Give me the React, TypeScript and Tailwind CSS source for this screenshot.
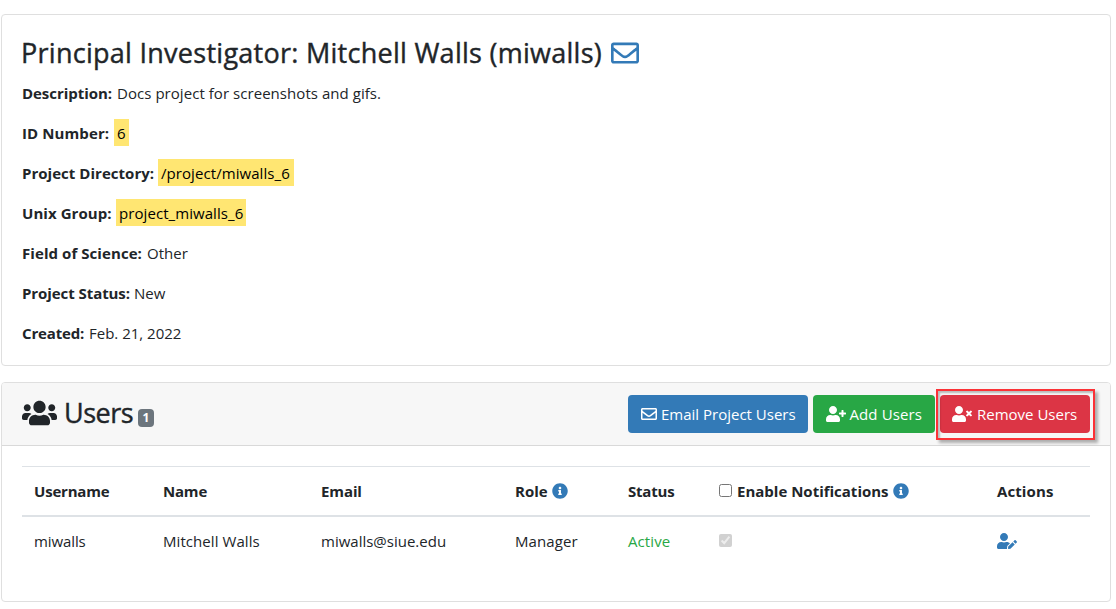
import type { ReactNode } from "react";
import {
  FaInfoCircle,
  FaRegEnvelope,
  FaUserEdit,
  FaUserPlus,
  FaUsers,
  FaUserTimes,
} from "react-icons/fa";

function Field({ label, labelClass, children }: { label: string; labelClass: string; children: ReactNode }) {
  return (
    <p className="flex h-6 items-center whitespace-nowrap">
      <b className={`${labelClass} shrink-0 font-bold`}>{label}</b>
      {children}
    </p>
  );
}

function Mark({ className, children }: { className: string; children: ReactNode }) {
  return (
    <mark className={`${className} -mt-px flex h-[27px] items-center bg-[#ffe672] pl-[3px] text-black`}>
      <span className="mt-px tracking-[0.07px]">{children}</span>
    </mark>
  );
}

export default function App() {
  return (
    <div className="h-[609px] w-[1116px] overflow-hidden bg-white pl-px pt-[14px] font-['Open_Sans','Noto_Sans',sans-serif] text-[15px] leading-6 text-[#212529]">
      <section className="h-[352px] w-[1110px] rounded border border-[#dfdfdf] px-5 pt-[21px]">
        <h3 className="flex h-[33px] items-center whitespace-nowrap text-[27px] font-medium tracking-[0.27px] [-webkit-text-stroke:0.4px_#212529]">
          <span className="-ml-px w-[590px]">Principal Investigator: Mitchell Walls (miwalls)</span>
          <FaRegEnvelope className="size-7 text-[#337ab7]" />
        </h3>
        <div className="mt-3 flex flex-col gap-4">
          <Field label="Description:" labelClass="w-[95px] tracking-[-0.05px]">
            <span className="tracking-[0.05px]">Docs project for screenshots and gifs.</span>
          </Field>
          <Field label="ID Number:" labelClass="w-[92px] tracking-[0.1px]">
            <Mark className="w-[15px]">6</Mark>
          </Field>
          <Field label="Project Directory:" labelClass="w-[136px] tracking-[0.03px]">
            <Mark className="w-[136px]">/project/miwalls_6</Mark>
          </Field>
          <Field label="Unix Group:" labelClass="w-[94px] tracking-[0.07px]">
            <Mark className="w-[130px]">project_miwalls_6</Mark>
          </Field>
          <Field label="Field of Science:" labelClass="w-[125px] tracking-[0.07px]">
            <span>Other</span>
          </Field>
          <Field label="Project Status:" labelClass="w-[112px] tracking-[-0.07px]">
            <span>New</span>
          </Field>
          <Field label="Created:" labelClass="w-[67px] tracking-[-0.15px]">
            <span>Feb. 21, 2022</span>
          </Field>
        </div>
      </section>

      <section className="mt-4 h-[220px] w-[1110px] rounded border border-[#dfdfdf]">
        <header className="flex h-[63px] items-center justify-between rounded-t-[3px] border-b border-[#d9d9d9] bg-[#f7f7f7] pl-5 pr-[20px]">
          <h3 className="flex items-center text-[27px] font-medium tracking-[-0.5px]">
            <FaUsers className="-mt-0.5 h-[28px] w-[35px]" />
            <span className="-mt-0.5 ml-[7px] w-[74px] [-webkit-text-stroke:0.4px_#212529]">Users</span>
            <span className="mt-2 flex h-[18px] w-4 items-center justify-center rounded bg-[#6c757d] text-[12px] font-bold leading-none tracking-normal text-white">
              1
            </span>
          </h3>
          <div className="flex whitespace-nowrap text-white">
            <button className="flex h-[38px] w-[180px] items-center rounded bg-[#337ab7] pl-[13px]">
              <FaRegEnvelope className="mr-1 size-4" />
              <span>Email Project Users</span>
            </button>
            <button className="ml-[5px] flex h-[38px] w-[122px] items-center rounded bg-[#28a745] pl-[12.5px]">
              <FaUserPlus className="mr-1 h-4 w-5" />
              <span className="tracking-[0.1px]">Add Users</span>
            </button>
            <div className="relative ml-[5px]">
              <button className="flex h-[38px] w-[150px] items-center rounded bg-[#dc3545] pl-[12px]">
                <FaUserTimes className="mr-[5px] h-4 w-5" />
                <span>Remove Users</span>
              </button>
              <span className="pointer-events-none absolute -left-1 -top-1.5 h-[51px] w-[159px] border-2 border-[#fb3237] shadow-[3px_3px_3px_rgba(0,0,0,0.3),inset_2px_2px_2px_rgba(0,0,0,0.25)]" />
            </div>
          </div>
        </header>
        <div className="px-5 pt-5">
          <div className="grid h-[51px] grid-cols-[129px_158px_194px_113px_91px_278px_1fr] items-center whitespace-nowrap border-b-2 border-t border-[#dee2e6] pl-3 font-bold">
            <span className="tracking-[-0.2px]">Username</span>
            <span className="tracking-[-0.2px]">Name</span>
            <span className="tracking-[-0.1px]">Email</span>
            <span className="flex items-center">
              <span className="w-[37px]">Role</span>
              <FaInfoCircle className="size-4 text-[#337ab7]" />
            </span>
            <span className="tracking-[-0.2px]">Status</span>
            <span className="flex items-center">
              <input type="checkbox" className="-mt-0.5 mr-[5px] size-[13px]" aria-label="Enable Notifications" />
              <span className="w-[156px]">Enable Notifications</span>
              <FaInfoCircle className="size-4 text-[#337ab7]" />
            </span>
            <span className="tracking-[0.1px]">Actions</span>
          </div>
          <div className="grid h-[48px] grid-cols-[129px_158px_194px_113px_91px_278px_1fr] items-center whitespace-nowrap pl-3">
            <span className="tracking-[-0.1px]">miwalls</span>
            <span className="tracking-[0.07px]">Mitchell Walls</span>
            <span>miwalls@siue.edu</span>
            <span className="tracking-[0.1px]">Manager</span>
            <span className="tracking-[0.1px] text-[#28a745]">Active</span>
            <input type="checkbox" checked disabled readOnly className="-mt-px size-[13px]" aria-label="Notifications" />
            <FaUserEdit className="h-4 w-5 text-[#337ab7]" />
          </div>
        </div>
      </section>
    </div>
  );
}
